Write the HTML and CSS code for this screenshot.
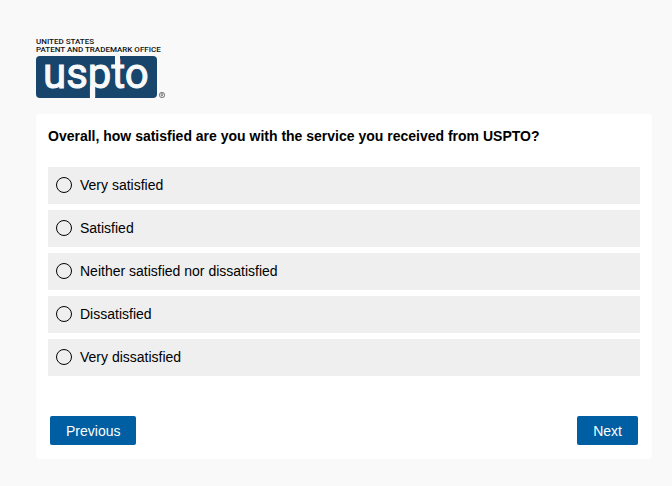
FILE: index.html
```html
<!DOCTYPE html>
<html lang="en">
<head>
    <meta charset="UTF-8">
    <meta name="viewport" content="width=device-width, initial-scale=1.0">
    <title>USPTO Survey</title>
    <link rel="stylesheet" href="styles.css">
</head>
<body>

    <div class="surveyWrap">
        <svg class="logo" width="132" height="64" viewBox="0 0 132 64" role="img" aria-label="United States Patent and Trademark Office">
            <text class="logoSmall" x="0" y="8">UNITED STATES</text>
            <text class="logoSmall" x="0" y="16">PATENT AND TRADEMARK OFFICE</text>
            <rect x="0" y="20" width="121" height="42" rx="4" fill="#17456b"/>
            <text class="logoName" x="7" y="52">uspto</text>
            <!-- stems of the p and the t run out of the box -->
            <rect x="54" y="50" width="5" height="13" fill="#f9f9f9"/>
            <rect x="79" y="19" width="5" height="14" fill="#f9f9f9"/>
            <circle cx="126" cy="59" r="2.7" fill="none" stroke="#555" stroke-width="0.7"/>
            <path d="M125.2 60.6v-3.2h1q0.9 0 0.9 0.8t-0.9 0.8h-1M126.2 59l1 1.6" fill="none" stroke="#555" stroke-width="0.6"/>
        </svg>

        <form class="survey">
            <fieldset class="question">
                <legend>Overall, how satisfied are you with the service you received from USPTO?</legend>

                <label class="option">
                    <input type="radio" name="satisfaction" value="5">
                    <span>Very satisfied</span>
                </label>
                <label class="option">
                    <input type="radio" name="satisfaction" value="4">
                    <span>Satisfied</span>
                </label>
                <label class="option">
                    <input type="radio" name="satisfaction" value="3">
                    <span>Neither satisfied nor dissatisfied</span>
                </label>
                <label class="option">
                    <input type="radio" name="satisfaction" value="2">
                    <span>Dissatisfied</span>
                </label>
                <label class="option">
                    <input type="radio" name="satisfaction" value="1">
                    <span>Very dissatisfied</span>
                </label>
            </fieldset>

            <div class="buttons">
                <button type="button">Previous</button>
                <button type="submit">Next</button>
            </div>
        </form>
    </div>

</body>
</html>
```
FILE: styles.css
```css
*{
    box-sizing: border-box;
}

body{
    margin: 0;
    background-color: #f9f9f9;
    color: #000;
    font-family: "Liberation Sans", Arial, sans-serif;
    font-size: 14px;
}

.surveyWrap{
    padding: 36px 20px 27px 36px;
}

.logo{
    display: block;
    margin-bottom: 14px;
}

.logoSmall{
    font-family: Roboto, sans-serif;
    font-size: 8px;
    font-weight: 500;
    fill: #111;
}

.logoName{
    font-family: Roboto, sans-serif;
    font-size: 42px;
    font-weight: 400;
    fill: #f9f9f9;
    stroke: #f9f9f9;
    stroke-width: 1px;
}

.survey{
    padding: 12px 12px 14px;
    background-color: #fff;
    border-radius: 3px;
}

.question{
    display: flex;
    flex-direction: column;
    gap: 6px;
    min-width: 0;
    margin: 0;
    padding: 0;
    border: 0;
}

.question legend{
    padding: 0;
    margin-bottom: 21px;
    font-size: 14px;
    font-weight: bold;
    line-height: 20px;
}

.option{
    display: flex;
    align-items: center;
    gap: 8px;
    padding: 8px 8px 9px;
    background-color: #efefef;
    line-height: 20px;
}

.option input{
    appearance: none;
    flex: none;
    width: 16px;
    height: 16px;
    margin: 0;
    border: 1px solid #000;
    border-radius: 50%;
}

.option input:checked{
    background-color: #005ea2;
    box-shadow: inset 0 0 0 3px #efefef;
}

.buttons{
    display: flex;
    justify-content: space-between;
    margin-top: 40px;
    padding: 0 2px;
}

.buttons button{
    padding: 5px 16px 4px;
    border: 0;
    border-radius: 2px;
    background-color: #005ea2;
    color: #fff;
    font-family: inherit;
    font-size: 14px;
    line-height: 20px;
    cursor: pointer;
}
```
